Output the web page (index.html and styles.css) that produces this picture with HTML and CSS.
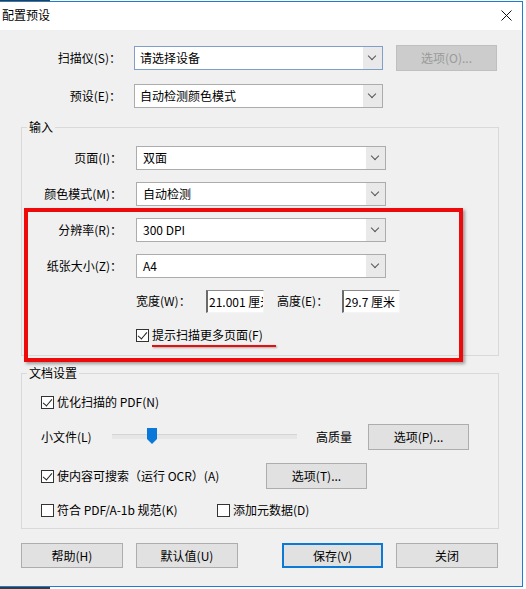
FILE: index.html
```html
<!DOCTYPE html>
<html lang="zh-CN">
<head>
  <meta charset="UTF-8">
  <title>配置预设</title>
  <link rel="stylesheet" href="styles.css">
</head>
<body>
  <div class="window">
    <div class="titlebar">
      <span class="title">配置预设</span>
      <svg class="close" width="11" height="11" viewBox="0 0 11 11">
        <path d="M0.5 0.5 L10.5 10.5 M10.5 0.5 L0.5 10.5" stroke="#111" stroke-width="1" fill="none"/>
      </svg>
    </div>

    <!-- scanner + preset -->
    <div class="top-grid">
      <span class="lbl">扫描仪(S)：</span>
      <div class="combo combo-focus"><span class="combo-text">请选择设备</span><span class="arrow"></span></div>
      <button class="btn" disabled>选项(O)...</button>
      <span class="lbl">预设(E)：</span>
      <div class="combo"><span class="combo-text">自动检测颜色模式</span><span class="arrow"></span></div>
    </div>

    <fieldset class="group group-input">
      <legend>输入</legend>
      <div class="field-grid">
        <span class="lbl">页面(I)：</span>
        <div class="combo"><span class="combo-text">双面</span><span class="arrow"></span></div>
        <span class="lbl">颜色模式(M)：</span>
        <div class="combo"><span class="combo-text">自动检测</span><span class="arrow"></span></div>
        <span class="lbl">分辨率(R)：</span>
        <div class="combo"><span class="combo-text">300 DPI</span><span class="arrow"></span></div>
        <span class="lbl">纸张大小(Z)：</span>
        <div class="combo"><span class="combo-text">A4</span><span class="arrow"></span></div>
      </div>
      <div class="dims">
        <span class="dim-lbl">宽度(W)：</span>
        <div class="num-box">21.001 厘米</div>
        <span class="dim-lbl dim-lbl-h">高度(E)：</span>
        <div class="num-box">29.7 厘米</div>
      </div>
      <label class="check check-more">
        <span class="box checked"></span>提示扫描更多页面(F)
      </label>
    </fieldset>

    <fieldset class="group group-doc">
      <legend>文档设置</legend>
      <div class="doc-row first">
        <label class="check"><span class="box checked"></span>优化扫描的 PDF(N)</label>
      </div>
      <div class="doc-row">
        <span class="sl-lbl">小文件(L)</span>
        <div class="track">
          <svg class="thumb" width="10" height="16" viewBox="0 0 10 16">
            <polygon points="0,0 10,0 10,11 5,16 0,11" fill="#0a78d8"/>
          </svg>
        </div>
        <span class="hq">高质量</span>
        <button class="btn">选项(P)...</button>
      </div>
      <div class="doc-row">
        <label class="check check-ocr"><span class="box checked"></span>使内容可搜索（运行 OCR）(A)</label>
        <button class="btn">选项(T)...</button>
      </div>
      <div class="doc-row">
        <label class="check check-pdfa"><span class="box"></span>符合 PDF/A-1b 规范(K)</label>
        <label class="check"><span class="box"></span>添加元数据(D)</label>
      </div>
    </fieldset>

    <div class="footer">
      <div class="btn-group">
        <button class="btn btn-foot">帮助(H)</button>
        <button class="btn btn-foot">默认值(U)</button>
      </div>
      <div class="btn-group">
        <button class="btn btn-foot btn-default">保存(V)</button>
        <button class="btn btn-foot">关闭</button>
      </div>
    </div>

    <!-- red annotation -->
    <div class="mark-box"></div>
    <div class="mark-line"></div>
  </div>
</body>
</html>
```

FILE: styles.css
```css
* {
  box-sizing: border-box;
}

body {
  margin: 0;
  width: 526px;
  height: 589px;
  background: #fff;
  font-family: "Noto Sans CJK SC", "Microsoft YaHei", sans-serif;
  font-size: 12px;
  line-height: 16px;
  color: #000;
  position: relative;
  overflow: hidden;
}

/* taskbar bits peeking out */
body::before,
body::after {
  content: "";
  position: absolute;
  left: 0;
  width: 50px;
  background: #3a3a3a;
}
body::before {
  top: 0;
  height: 1px;
}
body::after {
  top: 587px;
  height: 2px;
}

.window {
  position: relative;
  width: 523px;
  height: 586px;
  margin-top: 1px;
  border: 1px solid #1a7fd4;
  border-left: 0;
  background: #f0f0f0;
}

.titlebar {
  height: 28px;
  background: #fff;
  display: flex;
  align-items: center;
  justify-content: space-between;
  padding: 0 10px 2px 2px;
}

.close {
  display: block;
}

.lbl {
  text-align: right;
  white-space: nowrap;
}

.top-grid {
  display: grid;
  grid-template-columns: 121px 249px 101px;
  grid-auto-rows: 26px;
  column-gap: 13px;
  row-gap: 12px;
  align-items: center;
  padding-top: 15px;
}

.combo {
  height: 24px;
  display: flex;
  align-items: stretch;
  background: #fff;
  border: 1px solid #acacac;
}
.combo-focus {
  border-color: #7f9fc8;
}
.combo-text {
  flex: 1;
  padding-left: 5px;
  line-height: 22px;
  white-space: nowrap;
}
.arrow {
  width: 19px;
  background: #e9e9e9;
  position: relative;
}
.arrow::after {
  content: "";
  position: absolute;
  left: 6px;
  top: 6px;
  width: 5px;
  height: 5px;
  border-right: 1px solid #555;
  border-bottom: 1px solid #555;
  transform: rotate(45deg);
}

.btn {
  height: 26px;
  font: inherit;
  color: #000;
  background: #e1e1e1;
  border: 1px solid #adadad;
  padding: 0;
}
.btn:disabled {
  background: #cccccc;
  border-color: #bfbfbf;
  color: #9a9a9a;
}

.group {
  margin: 0 23px 0 21px;
  padding: 0;
  border: 1px solid #d9d9d9;
  min-width: 0;
}
.group legend {
  margin-left: 5px;
  padding: 0 2px;
  line-height: 16px;
}
.group-input {
  margin-top: 10px;
  padding-bottom: 12px;
}
.group-doc {
  margin-top: 9px;
  padding-bottom: 10px;
}

.field-grid {
  display: grid;
  grid-template-columns: 100px 250px;
  grid-auto-rows: 24px;
  column-gap: 14px;
  row-gap: 12px;
  align-items: center;
  margin-top: 11px;
}
.field-grid .combo-text {
  padding-left: 6px;
}

.dims {
  display: flex;
  align-items: center;
  height: 24px;
  margin: 11px 0 0 114px;
}
.dim-lbl {
  width: 70px;
  white-space: nowrap;
}
.dim-lbl-h {
  width: 65px;
  margin-left: 13px;
}
.num-box {
  width: 58px;
  height: 23px;
  background: #fff;
  border-top: 1px solid #8a8a8a;
  border-left: 2px solid #6a6a6a;
  border-right: 1px solid #f4f4f4;
  border-bottom: 1px solid #f4f4f4;
  padding-left: 1px;
  line-height: 21px;
  white-space: nowrap;
  overflow: hidden;
}

.check {
  display: flex;
  align-items: center;
  height: 16px;
  white-space: nowrap;
}
.box {
  width: 13px;
  height: 13px;
  margin-right: 3px;
  border: 1px solid #333;
  background: #fff;
  position: relative;
  flex: none;
}
.box.checked::after {
  content: "";
  position: absolute;
  left: 3px;
  top: 0px;
  width: 4px;
  height: 8px;
  border-right: 1px solid #222;
  border-bottom: 1px solid #222;
  transform: rotate(40deg);
}
.check-more {
  margin: 14px 0 0 114px;
}

.doc-row {
  display: flex;
  align-items: center;
  padding-left: 19px;
  margin-top: 13px;
}
.doc-row.first {
  margin-top: 13px;
}
.doc-row + .doc-row:nth-of-type(2) {
  margin-top: 14px;
}
.sl-lbl {
  width: 71px;
}
.track {
  position: relative;
  width: 185px;
  height: 26px;
  margin-right: 19px;
}
.track::before {
  content: "";
  position: absolute;
  left: 0;
  right: 0;
  top: 10px;
  height: 4px;
  background: #e6e6e6;
  border-top: 1px solid #d4d4d4;
}
.thumb {
  position: absolute;
  left: 35px;
  top: 4px;
}
.hq {
  width: 52px;
}
.doc-row .btn {
  width: 101px;
}
.check-ocr {
  width: 225px;
}
.check-pdfa {
  width: 176px;
}

.footer {
  display: flex;
  justify-content: space-between;
  margin-top: 14px;
  padding: 0 24px 0 21px;
}
.btn-group {
  display: flex;
  gap: 13px;
}
.btn-foot {
  width: 102px;
  height: 25px;
}
.btn-default {
  width: 101px;
  border: 2px solid #0a7ad6;
}

.mark-box {
  position: absolute;
  left: 24px;
  top: 206px;
  width: 439px;
  height: 154px;
  border: 4px solid #ee0a0a;
  box-shadow: 2px 2px 3px rgba(0, 0, 0, 0.35);
}
.mark-line {
  position: absolute;
  left: 152px;
  top: 343px;
  width: 124px;
  height: 2px;
  background: #e4100f;
  box-shadow: 1px 1px 2px rgba(0, 0, 0, 0.3);
}
```
